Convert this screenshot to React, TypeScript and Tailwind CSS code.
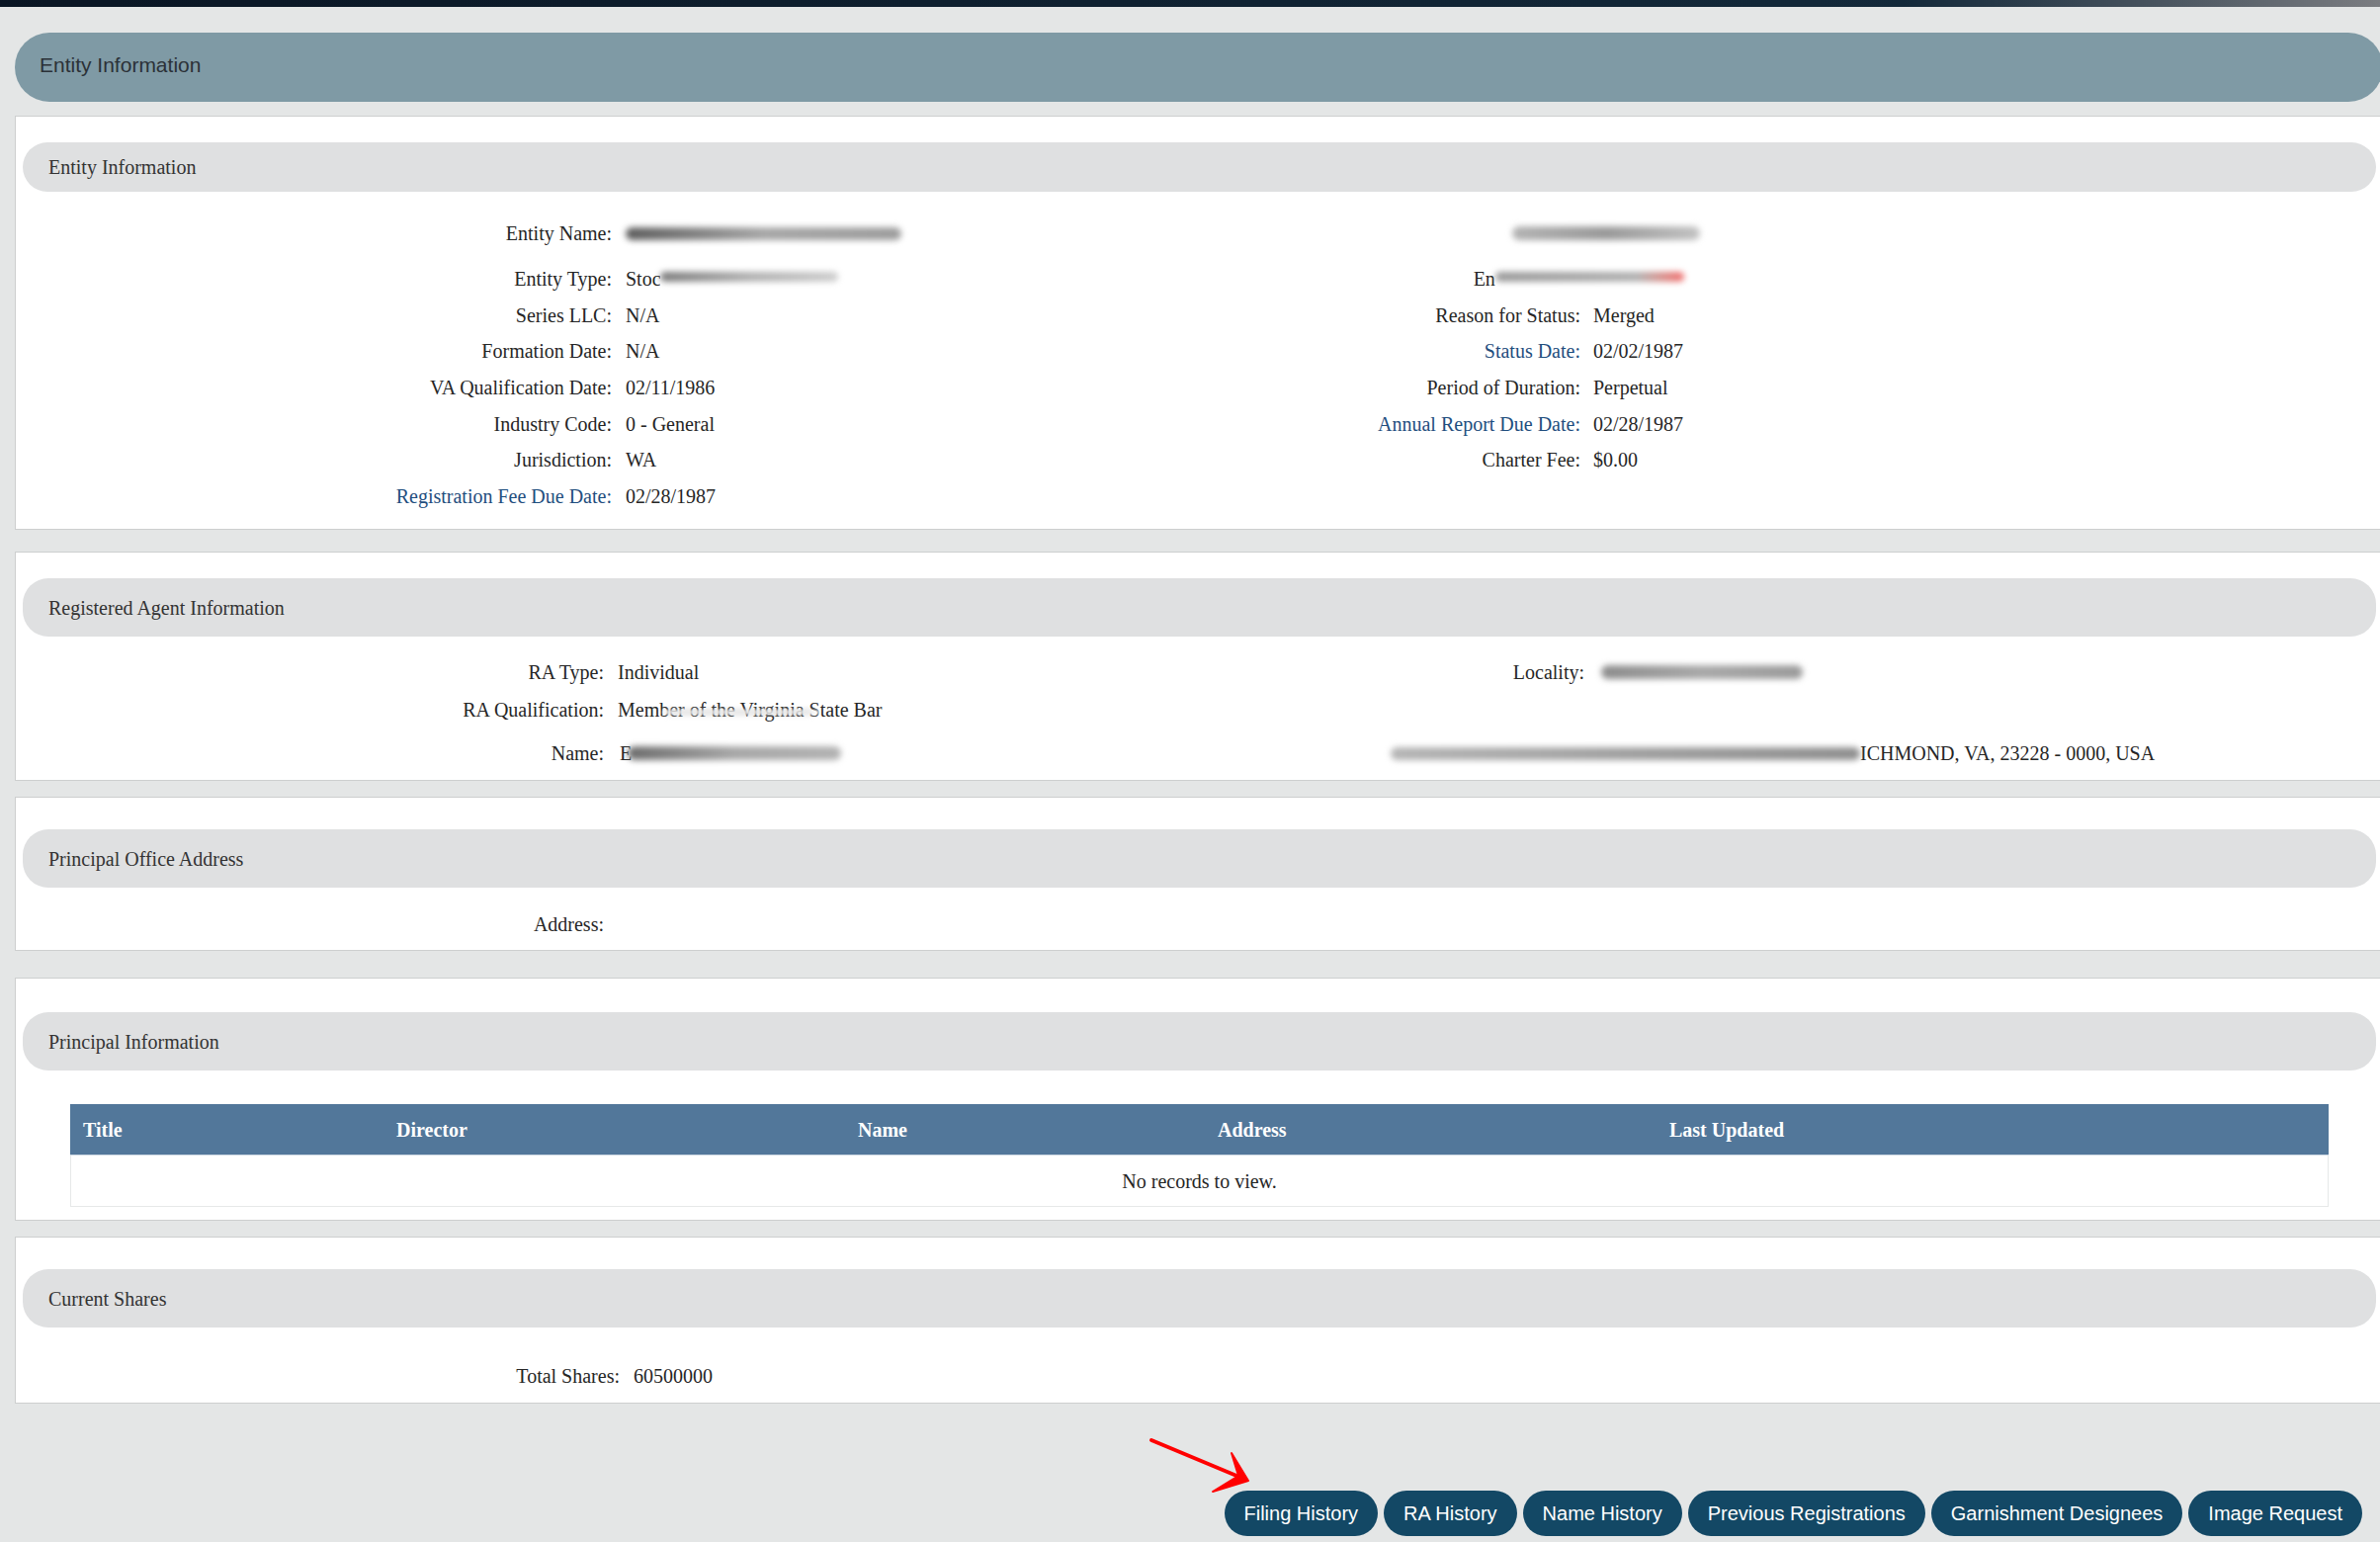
import React from 'react';

const sans = "font-['Liberation_Sans',Arial,sans-serif]";

const Smudge = ({ className }: { className: string }) => (
  <span className={`block rounded-full blur-[3px] ${className}`} />
);

const SubHeader = ({ title, short }: { title: string; short?: boolean }) => (
  <div
    className={`ml-[7px] flex w-[2381px] items-center rounded-[26px] bg-[#dfe0e1] pl-[26px] text-[#333] ${
      short ? 'h-[50px]' : 'h-[59px]'
    }`}
  >
    {title}
  </div>
);

const Panel = ({ className, children }: { className: string; children: React.ReactNode }) => (
  <section className={`ml-[15px] w-[2400px] border border-[#cdcfcf] bg-white ${className}`}>{children}</section>
);

type RowProps = {
  label?: React.ReactNode;
  value?: React.ReactNode;
  rLabel?: React.ReactNode;
  rValue?: React.ReactNode;
  lBlue?: boolean;
  rBlue?: boolean;
  className?: string;
};

// entity information rows: labels end at 619 / 1599
const InfoRow = ({ label, value, rLabel, rValue, lBlue, rBlue, className = '' }: RowProps) => (
  <div className={`flex h-[36.6px] items-center ${className}`}>
    <div className={`w-[603px] shrink-0 text-right ${lBlue ? 'text-[#1f4e7e]' : ''}`}>{label}</div>
    <div className="relative w-[580px] shrink-0 pl-[14px]">{value}</div>
    <div className={`relative w-[400px] shrink-0 text-right ${rBlue ? 'text-[#1f4e7e]' : ''}`}>{rLabel}</div>
    <div className="relative pl-[13px]">{rValue}</div>
  </div>
);

const buttons = ['Filing History', 'RA History', 'Name History', 'Previous Registrations', 'Garnishment Designees', 'Image Request'];

export default function App() {
  return (
    <div className="relative h-[1560px] w-[2408px] overflow-hidden bg-[#e4e6e6] font-['Liberation_Serif','Times_New_Roman',serif] text-[20px] text-[#262626]">
      <div className="h-[7px] bg-linear-to-r from-[#0a1624] via-[#13293a] via-80% to-[#7b7d81]" />

      <div className={`ml-[15px] mt-[26px] flex h-[70px] w-[2396px] items-center rounded-full bg-[#7f9aa5] pb-[4px] pl-[25px] text-[21px] text-[#2b3137] ${sans}`}>
        Entity Information
      </div>

      {/* Entity Information */}
      <Panel className="mt-[14px] pb-[15px]">
        <div className="mt-[26px]">
          <SubHeader title="Entity Information" short />
        </div>
        <div className="mt-[24px]">
          <InfoRow
            className="mb-[9.4px]"
            label="Entity Name:"
            value={<Smudge className="h-[13px] w-[279px] bg-linear-to-r from-[#5e5e5e] via-[#a6a6a6] to-[#9c9c9c]" />}
            rLabel={
              <Smudge className="absolute left-[331px] top-0 h-[14px] w-[190px] -translate-y-1/2 bg-linear-to-r from-[#b3b3b3] via-[#999] to-[#c2c2c2]" />
            }
          />
          <InfoRow
            label="Entity Type:"
            value={
              <>
                Stock Corporation
                <span className="absolute left-[49px] top-0 h-full w-[180px] bg-white">
                  <Smudge className="mt-[8px] h-[10px] w-full bg-linear-to-r from-[#7a7a7a] via-[#b0b0b0] to-[#cdcdcd]" />
                </span>
              </>
            }
            rLabel={
              <>
                Entity Status:
                <span className="absolute left-[314px] top-0 h-full w-[191px] bg-white">
                  <Smudge className="mt-[8px] h-[10px] w-full bg-linear-to-r from-[#9a9a9a] via-[#b0b0b0] via-75% to-[#ef6b6b]" />
                </span>
              </>
            }
          />
          <InfoRow label="Series LLC:" value="N/A" rLabel="Reason for Status:" rValue="Merged" />
          <InfoRow label="Formation Date:" value="N/A" rLabel="Status Date:" rBlue rValue="02/02/1987" />
          <InfoRow label="VA Qualification Date:" value="02/11/1986" rLabel="Period of Duration:" rValue="Perpetual" />
          <InfoRow label="Industry Code:" value="0 - General" rLabel="Annual Report Due Date:" rBlue rValue="02/28/1987" />
          <InfoRow label="Jurisdiction:" value="WA" rLabel="Charter Fee:" rValue="$0.00" />
          <InfoRow label="Registration Fee Due Date:" lBlue value="02/28/1987" />
        </div>
      </Panel>

      {/* Registered Agent */}
      <Panel className="mt-[22px] pb-[9px]">
        <div className="mt-[26px]">
          <SubHeader title="Registered Agent Information" />
        </div>
        <div className="mt-[18px] flex h-[36px] items-center">
          <div className="w-[595px] shrink-0 text-right">RA Type:</div>
          <div className="w-[580px] shrink-0 pl-[14px]">Individual</div>
          <div className="w-[412px] shrink-0 text-right">Locality:</div>
          <div className="pl-[17px]">
            <Smudge className="h-[14px] w-[204px] bg-linear-to-r from-[#8c8c8c] via-[#a8a8a8] to-[#9a9a9a]" />
          </div>
        </div>
        <div className="mt-[2px] flex h-[36px] items-center">
          <div className="w-[595px] shrink-0 text-right">RA Qualification:</div>
          <div className="relative w-[580px] shrink-0 pl-[14px]">
            Member of the Virginia State Bar
            <span className="absolute left-[59px] top-[15px] h-[5px] w-[159px] rounded-full bg-white/80 blur-[1px]" />
            <Smudge className="absolute left-[62px] top-[16px] h-[3px] w-[150px] bg-[#c4c4c4] blur-[2px]" />
          </div>
        </div>
        <div className="mt-[8px] flex h-[36px] items-center">
          <div className="w-[595px] shrink-0 text-right">Name:</div>
          <div className="flex w-[596px] shrink-0 items-center pl-[16px]">
            <span>E</span>
            <Smudge className="-ml-[4px] h-[14px] w-[216px] bg-linear-to-r from-[#6d6d6d] via-[#a7a7a7] to-[#b2b2b2]" />
          </div>
          <div className="flex items-center pl-[200px]">
            <Smudge className="h-[13px] w-[475px] bg-linear-to-r from-[#b5b5b5] via-[#a0a0a0] to-[#8f8f8f]" />
            <span>ICHMOND, VA, 23228 - 0000, USA</span>
          </div>
        </div>
      </Panel>

      {/* Principal Office */}
      <Panel className="mt-[16px] pb-[8px]">
        <div className="mt-[32px]">
          <SubHeader title="Principal Office Address" />
        </div>
        <div className="mt-[19px] flex h-[36px] items-center">
          <div className="w-[595px] shrink-0 text-right">Address:</div>
        </div>
      </Panel>

      {/* Principal Information */}
      <Panel className="mt-[27px] pb-[13px]">
        <div className="mt-[34px]">
          <SubHeader title="Principal Information" />
        </div>
        <div className="ml-[55px] mt-[34px] w-[2285px]">
          <div className="flex h-[52px] items-center border-b border-[#cdd8e2] bg-[#52779a] font-bold text-white">
            <div className="w-[317px] pl-[13px]">Title</div>
            <div className="w-[467px] pl-[13px]">Director</div>
            <div className="w-[364px] pl-[13px]">Name</div>
            <div className="w-[457px] pl-[13px]">Address</div>
            <div className="flex-1 pl-[13px]">Last Updated</div>
          </div>
          <div className="flex h-[52px] items-center justify-center border-x border-b border-[#e6e8e8] bg-white">
            No records to view.
          </div>
        </div>
      </Panel>

      {/* Current Shares */}
      <Panel className="mt-[16px] pb-[9px]">
        <div className="mt-[32px]">
          <SubHeader title="Current Shares" />
        </div>
        <div className="mt-[31px] flex h-[36px] items-center">
          <div className="w-[611px] shrink-0 text-right">Total Shares:</div>
          <div className="pl-[14px]">60500000</div>
        </div>
      </Panel>

      <div className={`mt-[88px] flex justify-end gap-[6px] pr-[18px] ${sans}`}>
        {buttons.map((b) => (
          <button key={b} className="h-[46px] rounded-[23px] bg-[#134865] px-[20px] text-[20px] text-white">
            {b}
          </button>
        ))}
      </div>

      {/* annotation arrow */}
      <svg className="absolute left-[1150px] top-[1440px] h-[80px] w-[130px]" viewBox="0 0 130 80" fill="none">
        <line x1="15" y1="17" x2="106" y2="55" stroke="#ff0000" strokeWidth="4" strokeLinecap="round" />
        <path d="M113 58 L96 30 L103 53 L77 69 Z" fill="#ff0000" stroke="#ff0000" strokeWidth="2" strokeLinejoin="round" />
      </svg>
    </div>
  );
}
